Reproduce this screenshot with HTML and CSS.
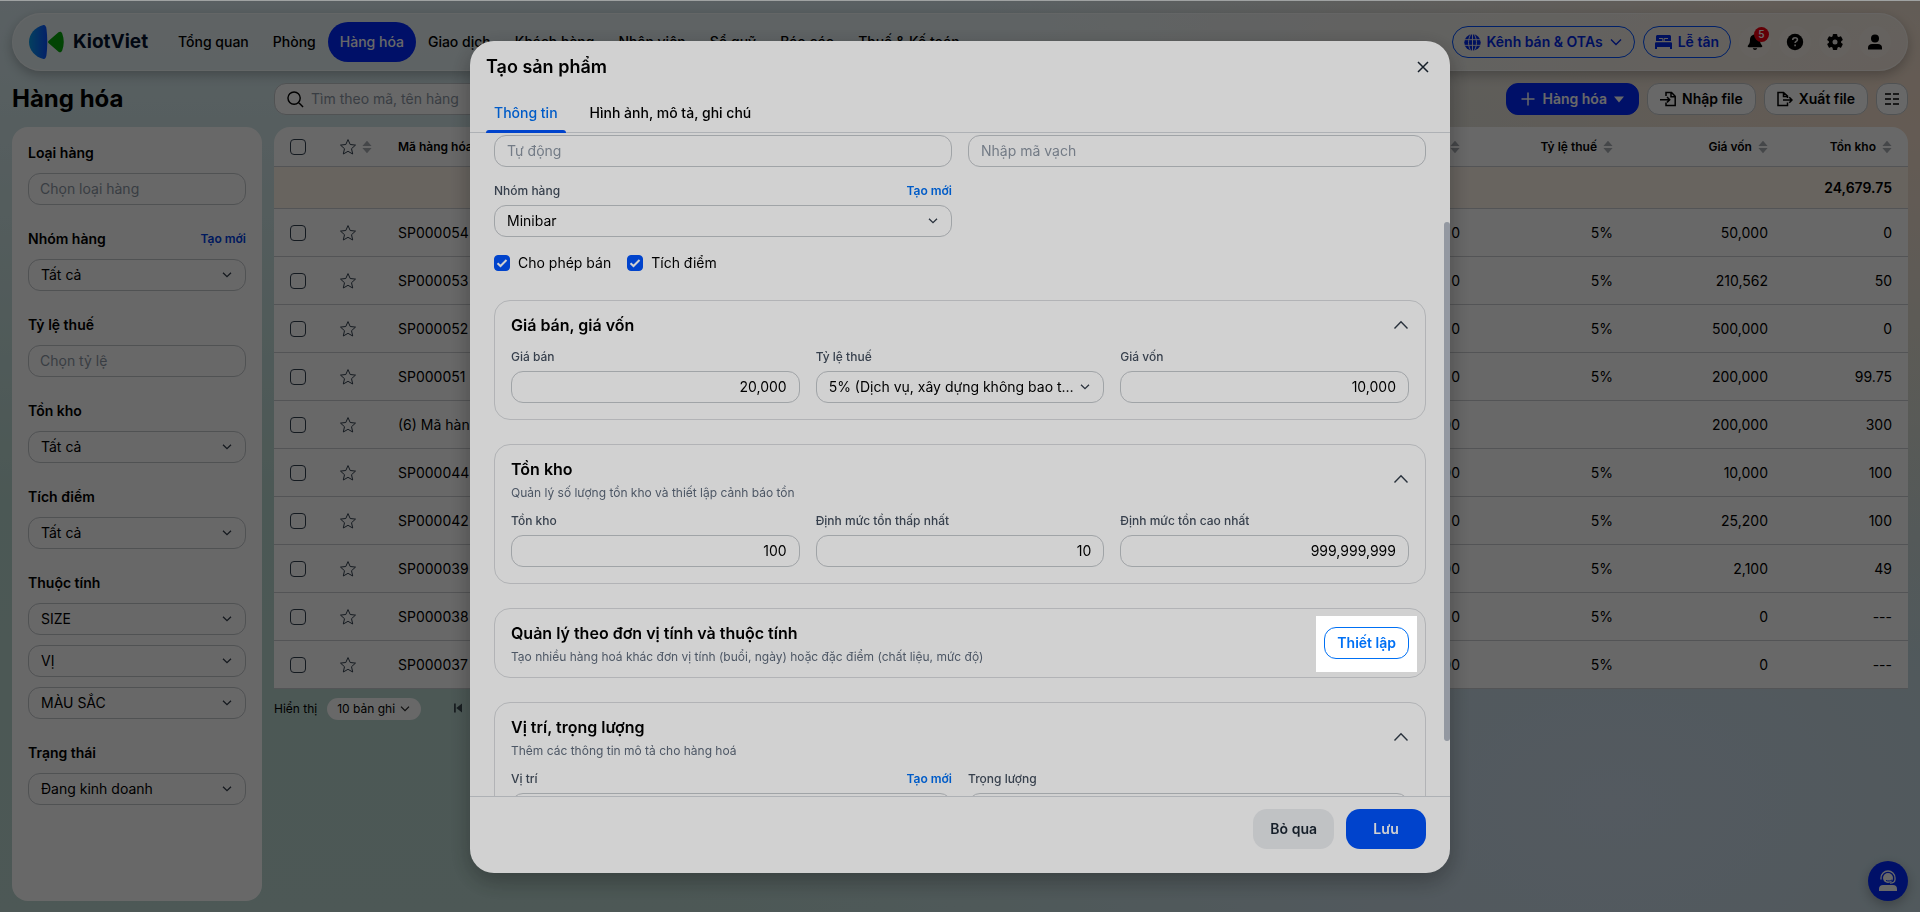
FILE: index.html
```html
<!DOCTYPE html>
<html lang="vi">

<head>
    <meta charset="UTF-8">
    <meta name="viewport" content="width=device-width, initial-scale=1.0">
    <title>Hàng hóa - KiotViet</title>
    <link rel="stylesheet" href="styles.css">
</head>

<body>
    <!-- Shared icons -->
    <svg class="sprite" aria-hidden="true">
        <symbol id="i-star" viewBox="0 0 16 16"><path d="M8 .6l2.200 4.900 5.300.6-4 3.600 1.200 5.300L8 12.300 3.300 15l1.200-5.300-4-3.600 5.300-.6z" fill="none" stroke="currentColor" stroke-linejoin="round"/></symbol>
        <symbol id="i-sort" viewBox="0 0 10 14"><path d="M5 .8L9.600 6H.4zM5 13.200L.4 8h9.200z" fill="currentColor"/></symbol>
        <symbol id="i-up" viewBox="0 0 16 16"><path d="M1.500 11.500L8 4.800l6.500 6.700" fill="none" stroke="currentColor" stroke-width="1.400"/></symbol>
        <symbol id="i-down" viewBox="0 0 16 16"><path d="M3 5.500l5 5 5-5" fill="none" stroke="currentColor" stroke-width="1.400"/></symbol>
    </svg>

    <div class="page">
        <header class="topbar">
            <a class="logo" href="#">
                <svg width="36" height="36" viewBox="0 0 36 36" aria-hidden="true">
                    <defs><linearGradient id="logo-blue"><stop offset="0" stop-color="#0a9be8"/><stop offset="1" stop-color="#0a50ff"/></linearGradient></defs>
                    <path d="M14.500 1C16 .7 17 2 17.500 5c1 8 1 18 0 26-.5 3-1.500 4.300-3 4C6 33 0 26 0 18S6 3 14.500 1z" fill="url(#logo-blue)"/>
                    <path d="M20 16.500L29.500 8.300c1.500-1 3-.6 3.700 1.200 2.100 5.500 2.100 11.500 0 17-.7 1.800-2.200 2.200-3.700 1.200L20 19.500c-1.300-1-1.300-2 0-3z" fill="#06a80a"/>
                </svg>
                <span>KiotViet</span>
            </a>
            <nav class="menu">
                <a href="#">Tổng quan</a>
                <a href="#">Phòng</a>
                <a href="#" class="active">Hàng hóa</a>
                <a href="#">Giao dịch</a>
                <a href="#">Khách hàng</a>
                <a href="#">Nhân viên</a>
                <a href="#">Sổ quỹ</a>
                <a href="#">Báo cáo</a>
                <a href="#">Thuế &amp; Kế toán</a>
            </nav>
            <div class="topbar-actions">
                <button class="btn-outline">
                    <svg width="17" height="17" viewBox="0 0 18 18" aria-hidden="true"><circle cx="9" cy="9" r="8.700" fill="currentColor"/><path d="M0 6h18M0 12h18M9 0v18M7.500 0c-3.600 5-3.600 13 0 18M10.500 0c3.600 5 3.600 13 0 18" fill="none" stroke="#eee9e6"/></svg>
                    Kênh bán &amp; OTAs
                    <svg width="14" height="16" viewBox="0 0 14 16" aria-hidden="true"><path d="M2 5.500l5 5 5-5" fill="none" stroke="currentColor" stroke-width="1.400"/></svg>
                </button>
                <button class="btn-outline">
                    <svg width="17" height="18" viewBox="0 0 17 18" aria-hidden="true"><path d="M2.500 2h12c.8 0 1.500.7 1.500 1.500V8H1V3.500C1 2.700 1.700 2 2.500 2zM1.300 9.300h14.400c.7 0 1.300.5 1.300 1.200V16h-2v-2H2v2H0v-5.500c0-.7.6-1.200 1.300-1.200z" fill="currentColor"/><path d="M4 5.500h3.800V8M13 5.500H9.200V8" fill="none" stroke="#eee9e6"/></svg>
                    Lễ tân
                </button>
                <button class="btn-round" aria-label="Thông báo">
                    <svg width="18" height="18" viewBox="0 0 18 18" aria-hidden="true"><path d="M9 1.500c-3.200 0-5 2.300-5 5.300 0 3.500-1 4.600-2 5.600-.6.700-.2 1.800.8 1.800h12.400c1 0 1.400-1.100.8-1.800-1-1-2-2.100-2-5.600 0-3-1.800-5.300-5-5.300zM6.800 15.300h4.400c-.3 1-1.200 1.700-2.200 1.700s-1.900-.7-2.200-1.700z" fill="currentColor"/></svg>
                    <span class="badge">5</span>
                </button>
                <button class="btn-round" aria-label="Trợ giúp">
                    <svg width="18" height="18" viewBox="0 0 18 18" aria-hidden="true"><circle cx="9" cy="9" r="8.200" fill="currentColor"/><path d="M6.700 7c0-1.500 1-2.300 2.400-2.300s2.300.8 2.300 2c0 1.700-2.300 1.700-2.300 3.300M9.100 11.500v1.700" fill="none" stroke="#e8e4e2" stroke-width="1.600"/></svg>
                </button>
                <button class="btn-round" aria-label="Thiết lập">
                    <svg width="18" height="18" viewBox="0 0 18 18" aria-hidden="true"><g fill="currentColor"><rect x="6.700" y="1" width="4.600" height="16" rx="1"/><rect x="6.700" y="1" width="4.600" height="16" rx="1" transform="rotate(60 9 9)"/><rect x="6.700" y="1" width="4.600" height="16" rx="1" transform="rotate(120 9 9)"/><circle cx="9" cy="9" r="6.200"/></g><circle cx="9" cy="9" r="2.500" fill="#e8e4e2"/></svg>
                </button>
                <button class="btn-round" aria-label="Tài khoản">
                    <svg width="18" height="18" viewBox="0 0 18 18" aria-hidden="true"><circle cx="9" cy="5.500" r="4" fill="currentColor"/><path d="M2 16.500v-2c0-2.200 1.800-3.500 4-3.500h6c2.200 0 4 1.300 4 3.500v2z" fill="currentColor"/></svg>
                </button>
            </div>
        </header>

        <div class="toolbar">
            <h1>Hàng hóa</h1>
            <label class="search">
                <svg width="17" height="17" viewBox="0 0 18 18" aria-hidden="true"><path d="M12 12l5 5M7.500 1a6.500 6.500 0 1 1 0 13 6.500 6.500 0 0 1 0-13z" fill="none" stroke="currentColor" stroke-width="1.500"/></svg>
                <input type="text" placeholder="Tìm theo mã, tên hàng" aria-label="Tìm hàng hóa">
            </label>
            <div class="toolbar-actions">
                <button class="btn btn-add">
                    <svg width="14" height="14" viewBox="0 0 14 14" aria-hidden="true"><path d="M7 .5v13M.5 7h13" stroke="currentColor" stroke-width="1.500"/></svg>
                    Hàng hóa
                    <svg width="10" height="7" viewBox="0 0 10 7" aria-hidden="true"><path d="M0 .5h10L5 6.500z" fill="currentColor"/></svg>
                </button>
                <button class="btn">
                    <svg width="16" height="16" viewBox="0 0 16 16" aria-hidden="true"><path d="M6 5V1.500h5.500l3.700 3.700v9.300H6v-3M11 1.500v4.200h4M0 8.700h9.500M7 6l2.700 2.700L7 11.400" fill="none" stroke="currentColor" stroke-width="1.500"/></svg>
                    Nhập file
                </button>
                <button class="btn">
                    <svg width="16" height="16" viewBox="0 0 16 16" aria-hidden="true"><path d="M10.500 11.500v3H1v-13h5.500L10.500 5v2M6.500 1.500v4h4M6 9h9M12.300 6.300L15 9l-2.700 2.700" fill="none" stroke="currentColor" stroke-width="1.500"/></svg>
                    Xuất file
                </button>
                <button class="btn btn-icon" aria-label="Tùy chọn cột">
                    <svg width="16" height="14" viewBox="0 0 16 14" aria-hidden="true"><path d="M1 2h6M9 2h6M1 7h6M9 7h6M1 12h6M9 12h6" stroke="currentColor" stroke-width="1.500"/></svg>
                </button>
            </div>
        </div>

        <div class="columns">
            <aside class="filters">
                <div class="filter">
                    <label for="f-type">Loại hàng</label>
                    <input class="field" id="f-type" type="text" placeholder="Chọn loại hàng">
                </div>
                <div class="filter">
                    <div class="filter-head"><label for="f-group">Nhóm hàng</label><a href="#">Tạo mới</a></div>
                    <select class="field" id="f-group"><option>Tất cả</option></select>
                </div>
                <div class="filter">
                    <label for="f-tax">Tỷ lệ thuế</label>
                    <input class="field" id="f-tax" type="text" placeholder="Chọn tỷ lệ">
                </div>
                <div class="filter">
                    <label for="f-stock">Tồn kho</label>
                    <select class="field" id="f-stock"><option>Tất cả</option></select>
                </div>
                <div class="filter">
                    <label for="f-point">Tích điểm</label>
                    <select class="field" id="f-point"><option>Tất cả</option></select>
                </div>
                <div class="filter">
                    <label for="f-size">Thuộc tính</label>
                    <select class="field" id="f-size"><option>SIZE</option></select>
                    <select class="field" aria-label="Vị"><option>VỊ</option></select>
                    <select class="field" aria-label="Màu sắc"><option>MÀU SẮC</option></select>
                </div>
                <div class="filter">
                    <label for="f-status">Trạng thái</label>
                    <select class="field" id="f-status"><option>Đang kinh doanh</option></select>
                </div>
            </aside>

            <main class="content">
                <table class="goods">
                    <colgroup>
                        <col class="c-check"><col class="c-star"><col class="c-code"><col><col class="c-tax"><col class="c-cost"><col class="c-stock">
                    </colgroup>
                    <thead>
                        <tr>
                            <th><input type="checkbox" aria-label="Chọn tất cả"></th>
                            <th><span class="star-head"><svg class="star"><use href="#i-star"/></svg><svg class="sort"><use href="#i-sort"/></svg></span></th>
                            <th>Mã hàng hóa</th>
                            <th class="num">Giá bán <svg class="sort"><use href="#i-sort"/></svg></th>
                            <th class="num">Tỷ lệ thuế <svg class="sort"><use href="#i-sort"/></svg></th>
                            <th class="num">Giá vốn <svg class="sort"><use href="#i-sort"/></svg></th>
                            <th class="num">Tồn kho <svg class="sort"><use href="#i-sort"/></svg></th>
                        </tr>
                    </thead>
                    <tbody>
                        <tr class="total"><td colspan="6"></td><td class="num">24,679.75</td></tr>
                        <tr><td><input type="checkbox" aria-label="SP000054"></td><td><svg class="star"><use href="#i-star"/></svg></td><td>SP000054</td><td class="num">0</td><td class="num">5%</td><td class="num">50,000</td><td class="num">0</td></tr>
                        <tr><td><input type="checkbox" aria-label="SP000053"></td><td><svg class="star"><use href="#i-star"/></svg></td><td>SP000053</td><td class="num">0</td><td class="num">5%</td><td class="num">210,562</td><td class="num">50</td></tr>
                        <tr><td><input type="checkbox" aria-label="SP000052"></td><td><svg class="star"><use href="#i-star"/></svg></td><td>SP000052</td><td class="num">0</td><td class="num">5%</td><td class="num">500,000</td><td class="num">0</td></tr>
                        <tr><td><input type="checkbox" aria-label="SP000051"></td><td><svg class="star"><use href="#i-star"/></svg></td><td>SP000051</td><td class="num">0</td><td class="num">5%</td><td class="num">200,000</td><td class="num">99.75</td></tr>
                        <tr><td><input type="checkbox" aria-label="(6) Mã hàng"></td><td><svg class="star"><use href="#i-star"/></svg></td><td>(6) Mã hàng</td><td class="num">00</td><td class="num"></td><td class="num">200,000</td><td class="num">300</td></tr>
                        <tr><td><input type="checkbox" aria-label="SP000044"></td><td><svg class="star"><use href="#i-star"/></svg></td><td>SP000044</td><td class="num">00</td><td class="num">5%</td><td class="num">10,000</td><td class="num">100</td></tr>
                        <tr><td><input type="checkbox" aria-label="SP000042"></td><td><svg class="star"><use href="#i-star"/></svg></td><td>SP000042</td><td class="num">0</td><td class="num">5%</td><td class="num">25,200</td><td class="num">100</td></tr>
                        <tr><td><input type="checkbox" aria-label="SP000039"></td><td><svg class="star"><use href="#i-star"/></svg></td><td>SP000039</td><td class="num">00</td><td class="num">5%</td><td class="num">2,100</td><td class="num">49</td></tr>
                        <tr><td><input type="checkbox" aria-label="SP000038"></td><td><svg class="star"><use href="#i-star"/></svg></td><td>SP000038</td><td class="num">0</td><td class="num">5%</td><td class="num">0</td><td class="num">---</td></tr>
                        <tr><td><input type="checkbox" aria-label="SP000037"></td><td><svg class="star"><use href="#i-star"/></svg></td><td>SP000037</td><td class="num">00</td><td class="num">5%</td><td class="num">0</td><td class="num">---</td></tr>
                    </tbody>
                </table>
                <div class="pager">
                    <label for="page-size">Hiển thị</label>
                    <select id="page-size"><option>10 bản ghi</option></select>
                    <button aria-label="Trang đầu"><svg width="10" height="10" viewBox="0 0 10 10" aria-hidden="true"><path d="M1 .5h1.800v9H1zM9 .5v9L3.300 5z" fill="currentColor"/></svg></button>
                </div>
            </main>
        </div>
    </div>

    <button class="support" aria-label="Hỗ trợ">
        <svg width="22" height="22" viewBox="0 0 22 22" aria-hidden="true"><circle cx="11" cy="8" r="5" fill="currentColor"/><path d="M4 9.500V8a7 7 0 0 1 14 0v1.500c0 2.500-2 3.700-5 3.700" fill="none" stroke="currentColor" stroke-width="1.300"/><path d="M9 10.500c2 .8 4.500.6 6-.5" fill="none" stroke="#0028ff"/><path d="M2 21v-2c0-2.500 1.500-4 4-4h10c2.500 0 4 1.500 4 4v2z" fill="currentColor"/></svg>
    </button>

    <!-- Product form -->
    <div class="backdrop">
        <div class="modal" role="dialog" aria-labelledby="modal-title">
            <div class="modal-head">
                <h2 id="modal-title">Tạo sản phẩm</h2>
                <button class="close" aria-label="Đóng"><svg width="12" height="12" viewBox="0 0 12 12" aria-hidden="true"><path d="M1 1l10 10M11 1L1 11" stroke="currentColor" stroke-width="1.500"/></svg></button>
            </div>
            <div class="tabs">
                <button class="tab active">Thông tin</button>
                <button class="tab">Hình ảnh, mô tả, ghi chú</button>
            </div>
            <div class="modal-body">
                <div class="grid-2">
                    <input class="field" type="text" placeholder="Tự động" aria-label="Mã hàng">
                    <input class="field" type="text" placeholder="Nhập mã vạch" aria-label="Mã vạch">
                    <div class="form-item">
                        <div class="form-label"><label for="p-group">Nhóm hàng</label><a href="#">Tạo mới</a></div>
                        <select class="field" id="p-group"><option>Minibar</option></select>
                    </div>
                </div>
                <div class="checks">
                    <label><input type="checkbox" checked>Cho phép bán</label>
                    <label><input type="checkbox" checked>Tích điểm</label>
                </div>

                <section class="card">
                    <div class="card-head">
                        <h3>Giá bán, giá vốn</h3>
                        <button class="collapse" aria-label="Thu gọn"><svg width="16" height="16"><use href="#i-up"/></svg></button>
                    </div>
                    <div class="grid-3">
                        <div class="form-item">
                            <div class="form-label"><label for="p-price">Giá bán</label></div>
                            <input class="field num" id="p-price" type="text" value="20,000">
                        </div>
                        <div class="form-item">
                            <div class="form-label"><label for="p-tax">Tỷ lệ thuế</label></div>
                            <select class="field" id="p-tax"><option>5% (Dịch vụ, xây dựng không bao thầu nguyên vật liệu)</option></select>
                        </div>
                        <div class="form-item">
                            <div class="form-label"><label for="p-cost">Giá vốn</label></div>
                            <input class="field num" id="p-cost" type="text" value="10,000">
                        </div>
                    </div>
                </section>

                <section class="card">
                    <div class="card-head">
                        <div>
                            <h3>Tồn kho</h3>
                            <p>Quản lý số lượng tồn kho và thiết lập cảnh báo tồn</p>
                        </div>
                        <button class="collapse" aria-label="Thu gọn"><svg width="16" height="16"><use href="#i-up"/></svg></button>
                    </div>
                    <div class="grid-3">
                        <div class="form-item">
                            <div class="form-label"><label for="p-stock">Tồn kho</label></div>
                            <input class="field num" id="p-stock" type="text" value="100">
                        </div>
                        <div class="form-item">
                            <div class="form-label"><label for="p-min">Định mức tồn thấp nhất</label></div>
                            <input class="field num" id="p-min" type="text" value="10">
                        </div>
                        <div class="form-item">
                            <div class="form-label"><label for="p-max">Định mức tồn cao nhất</label></div>
                            <input class="field num" id="p-max" type="text" value="999,999,999">
                        </div>
                    </div>
                </section>

                <section class="card card-short">
                    <div class="card-head">
                        <div>
                            <h3>Quản lý theo đơn vị tính và thuộc tính</h3>
                            <p>Tạo nhiều hàng hoá khác đơn vị tính (buổi, ngày) hoặc đặc điểm (chất liệu, mức độ)</p>
                        </div>
                        <button class="btn-setup">Thiết lập</button>
                    </div>
                </section>

                <section class="card">
                    <div class="card-head">
                        <div>
                            <h3>Vị trí, trọng lượng</h3>
                            <p>Thêm các thông tin mô tả cho hàng hoá</p>
                        </div>
                        <button class="collapse" aria-label="Thu gọn"><svg width="16" height="16"><use href="#i-up"/></svg></button>
                    </div>
                    <div class="grid-2">
                        <div class="form-item">
                            <div class="form-label"><label for="p-place">Vị trí</label><a href="#">Tạo mới</a></div>
                            <select class="field" id="p-place"><option></option></select>
                        </div>
                        <div class="form-item">
                            <div class="form-label"><label for="p-weight">Trọng lượng</label></div>
                            <input class="field num" id="p-weight" type="text">
                        </div>
                    </div>
                </section>
            </div>
            <div class="modal-foot">
                <button class="btn-cancel">Bỏ qua</button>
                <button class="btn-save">Lưu</button>
            </div>
            <div class="scroll-thumb"></div>
            <div class="spotlight"></div>
        </div>
    </div>
</body>

</html>
```

FILE: styles.css
```css
* {
    box-sizing: border-box;
}

body {
    margin: 0;
    border-top: 1px solid #c2c6c6;
    font-family: "Inter", "Liberation Sans", sans-serif;
    font-size: 14px;
    line-height: 20px;
    color: #000;
    overflow: hidden;
    background:
        radial-gradient(ellipse 50% 60% at 100% 12%, #f6dfcc 0%, rgba(246, 223, 204, 0) 100%),
        radial-gradient(ellipse 50% 70% at 84% 88%, #cddcec 0%, rgba(205, 220, 236, 0) 100%),
        linear-gradient(to bottom, #dcecf2 0%, #b9d7d0 55%, #bcd8d2 100%);
}

button, input, select {
    font: inherit;
    color: inherit;
}

button {
    padding: 0;
    border: none;
    background: none;
    cursor: pointer;
}

a {
    color: #0070f4;
    text-decoration: none;
}

h1, h2, h3, p {
    margin: 0;
}

.sprite {
    display: none;
}

.page {
    display: flex;
    flex-direction: column;
    height: calc(100vh - 1px);
    padding: 12px 12px 11px;
}

/* Top bar */
.topbar {
    display: flex;
    align-items: center;
    height: 58px;
    padding: 0 16px;
    border: 1px solid rgba(255, 255, 255, 0.5);
    border-radius: 29px;
    background: rgba(255, 255, 255, 0.4);
    box-shadow: 0 4px 12px rgba(0, 0, 0, 0.25);
}

.logo {
    display: flex;
    align-items: center;
    gap: 8px;
    width: 137px;
    color: #04122e;
    font-size: 19px;
    font-weight: 700;
}

.menu {
    display: flex;
    flex: 1;
    white-space: nowrap;
}

.menu a {
    padding: 10px 12px;
    border-radius: 20px;
    color: #000;
    font-weight: 500;
}

.menu a.active {
    background: #0028ff;
    color: #fff;
}

.topbar-actions {
    display: flex;
    gap: 8px;
}

.btn-outline {
    display: flex;
    align-items: center;
    gap: 6px;
    height: 32px;
    padding: 0 11px;
    border: 1px solid #0050ff;
    border-radius: 16px;
    color: #0028e6;
    font-weight: 600;
}

.btn-round {
    position: relative;
    display: flex;
    align-items: center;
    justify-content: center;
    width: 32px;
    height: 32px;
    border-radius: 50%;
    background: rgba(255, 255, 255, 0.2);
}

.badge {
    position: absolute;
    top: 1px;
    left: 15px;
    width: 15px;
    height: 15px;
    border-radius: 50%;
    background: #f00010;
    color: #fff;
    font-size: 10px;
    font-weight: 600;
    line-height: 15px;
}

/* Title, search and actions */
.toolbar {
    display: flex;
    align-items: center;
    gap: 12px;
    padding: 12px 0;
}

.toolbar h1 {
    width: 250px;
    font-size: 24px;
    line-height: 32px;
    font-weight: 700;
}

.search {
    display: flex;
    align-items: center;
    gap: 7px;
    width: 400px;
    height: 32px;
    padding: 0 12px;
    border: 1px solid #c4c8cc;
    border-radius: 12px;
    background: #fff;
}

.search input {
    flex: 1;
    border: none;
    background: none;
    padding: 0;
}

.toolbar-actions {
    display: flex;
    gap: 8px;
    margin-left: auto;
}

.btn {
    display: flex;
    align-items: center;
    gap: 6px;
    height: 32px;
    padding: 0 12px;
    border: 1px solid #c4c8cc;
    border-radius: 12px;
    background: #fff;
    font-weight: 600;
}

.btn-add {
    gap: 7px;
    padding: 0 14px;
    border-color: #0028ff;
    background: #0028ff;
    color: #fff;
}

.btn-icon {
    width: 32px;
    padding: 0 7px;
}

.columns {
    display: flex;
    flex: 1;
    gap: 12px;
    min-height: 0;
}

/* Filters */
.filters {
    display: flex;
    flex-direction: column;
    gap: 24px;
    width: 250px;
    padding: 16px;
    border-radius: 16px;
    background: #fff;
}

.filter {
    display: flex;
    flex-direction: column;
    gap: 10px;
    font-weight: 600;
}

.filter-head {
    display: flex;
    justify-content: space-between;
}

.filter-head a {
    color: #0040e6;
    font-size: 12px;
    font-weight: 600;
}

.field {
    width: 100%;
    height: 32px;
    padding: 0 12px;
    border: 1px solid #c4c8cc;
    border-radius: 12px;
    background: none;
    font-weight: 400;
}

input.field {
    padding-bottom: 2px;
}

input::placeholder {
    color: #8d97a4;
    opacity: 1;
}

.filters input.field {
    padding-left: 11px;
}

select {
    appearance: none;
    overflow: hidden;
    text-overflow: ellipsis;
    white-space: nowrap;
}

select.field {
    padding-right: 28px;
    background: url("data:image/svg+xml,%3Csvg xmlns='http://www.w3.org/2000/svg' width='10' height='6'%3E%3Cpath d='M1 .7l4 4 4-4' fill='none' stroke='%23333d4a' stroke-width='1.300'/%3E%3C/svg%3E") no-repeat right 13px center;
}

input[type="checkbox"] {
    appearance: none;
    display: block;
    width: 16px;
    height: 16px;
    margin: 0;
    border: 1px solid #33404f;
    border-radius: 4px;
}

input[type="checkbox"]:checked {
    border-color: #0052f9;
    background: #0052f9 url("data:image/svg+xml,%3Csvg xmlns='http://www.w3.org/2000/svg' width='12' height='10'%3E%3Cpath d='M1.500 5.200l3 2.800 6-6' fill='none' stroke='white' stroke-width='2'/%3E%3C/svg%3E") no-repeat center;
}

/* Goods table */
.content {
    flex: 1;
    min-width: 0;
}

.goods {
    width: 100%;
    table-layout: fixed;
    border-spacing: 0;
    border-radius: 16px 16px 0 0;
    overflow: hidden;
    background: #fff;
}

.c-check {
    width: 50px;
}

.c-star {
    width: 58px;
}

.c-code {
    width: 160px;
}

.c-tax {
    width: 153px;
}

.c-cost {
    width: 155px;
}

.c-stock {
    width: 124px;
}

.goods th,
.goods td {
    height: 48px;
    padding: 0 0 0 16px;
    border-bottom: 1px solid #ccced2;
    text-align: left;
    white-space: nowrap;
}

.goods th {
    height: 40px;
    font-size: 12px;
    font-weight: 600;
}

.goods .num {
    padding: 0 16px 0 0;
    text-align: right;
}

.goods .total td {
    height: 42px;
    background: #fff5ea;
    font-weight: 600;
}

.star {
    display: block;
    width: 16px;
    height: 16px;
    color: #33404f;
}

.star-head {
    display: flex;
    align-items: center;
    gap: 6px;
}

.sort {
    width: 10px;
    height: 14px;
    margin-left: 3px;
    color: #aaaeb4;
    vertical-align: middle;
}

.star-head .sort {
    margin: 0;
}

.pager {
    display: flex;
    align-items: center;
    gap: 10px;
    padding: 9px 0;
    font-size: 12px;
}

.pager select {
    width: 94px;
    height: 22px;
    padding: 0 10px;
    border: none;
    border-radius: 11px;
    background: #fff url("data:image/svg+xml,%3Csvg xmlns='http://www.w3.org/2000/svg' width='10' height='6'%3E%3Cpath d='M1 .7l4 4 4-4' fill='none' stroke='%23222' stroke-width='1.200'/%3E%3C/svg%3E") no-repeat right 11px center;
}

.pager button {
    margin-left: 22px;
    color: #3c4a52;
}

.support {
    position: fixed;
    right: 12px;
    bottom: 11px;
    display: flex;
    align-items: center;
    justify-content: center;
    width: 40px;
    height: 40px;
    border-radius: 50%;
    background: #0028ff;
    color: #fff;
    box-shadow: 0 4px 12px rgba(0, 0, 0, 0.25);
}

/* Modal */
.backdrop {
    position: fixed;
    inset: 1px 0 0;
    display: flex;
    justify-content: center;
    padding: 40px 16px 39px;
    background: rgba(0, 0, 0, 0.5);
}

.modal {
    position: relative;
    display: flex;
    flex-direction: column;
    width: 100%;
    max-width: 980px;
    border-radius: 24px;
    background: #fff;
    box-shadow: 0 8px 24px rgba(0, 0, 0, 0.3);
}

.modal-head {
    display: flex;
    align-items: center;
    justify-content: space-between;
    height: 52px;
    padding: 0 16px;
}

.modal-head h2 {
    font-size: 18px;
    font-weight: 600;
}

.close {
    display: flex;
    padding: 5px;
    color: #1c2733;
}

.tabs {
    display: flex;
    gap: 16px;
    height: 40px;
    padding: 0 16px;
    box-shadow: inset 0 -1px #d5d8dd;
}

.tab {
    position: relative;
    padding: 0 8px;
    font-weight: 500;
}

.tab.active {
    color: #0070f4;
}

.tab.active::after {
    content: "";
    position: absolute;
    left: 0;
    right: 0;
    bottom: 0;
    height: 3px;
    border-radius: 3px 3px 0 0;
    background: #0052f9;
}

.modal-body {
    flex: 1;
    min-height: 0;
    padding: 2px 24px 0;
    overflow: hidden;
}

.grid-2,
.grid-3 {
    display: grid;
    grid-template-columns: repeat(2, minmax(0, 1fr));
    gap: 16px;
}

.grid-3 {
    grid-template-columns: repeat(3, minmax(0, 1fr));
}

.field.num {
    text-align: right;
}

.form-item {
    display: flex;
    flex-direction: column;
    gap: 6px;
}

.form-label {
    display: flex;
    justify-content: space-between;
    color: #444f5e;
    font-size: 12px;
    line-height: 16px;
    font-weight: 500;
}

.form-label a {
    font-weight: 600;
}

.checks {
    display: flex;
    gap: 16px;
    margin: 16px 0 27px;
}

.checks label {
    display: flex;
    align-items: center;
    gap: 8px;
}

.card {
    margin-bottom: 24px;
    padding: 12px 16px 16px;
    border: 1px solid #d9dbde;
    border-radius: 16px;
}

.card-short {
    padding-bottom: 12px;
}

.card-head {
    display: flex;
    align-items: center;
    justify-content: space-between;
}

.card-head + div {
    margin-top: 12px;
}

.card h3 {
    font-size: 16px;
    line-height: 24px;
    font-weight: 600;
}

.card p {
    margin-top: 4px;
    color: #5f6b7c;
    font-size: 12px;
    line-height: 16px;
}

.collapse {
    display: flex;
    color: #333d4a;
}

.btn-setup {
    height: 32px;
    padding: 0 12px;
    border: 1px solid #0070f4;
    border-radius: 12px;
    color: #0070f4;
    font-weight: 600;
}

.modal-foot {
    display: flex;
    justify-content: flex-end;
    gap: 12px;
    padding: 12px 24px 24px;
    border-top: 1px solid #d5d8dd;
}

.modal-foot button {
    min-width: 80px;
    height: 40px;
    padding: 0 17px;
    border-radius: 14px;
    font-weight: 600;
}

.modal-foot .btn-cancel {
    background: #ebedf0;
    color: #1c2733;
}

.modal-foot .btn-save {
    background: #0052f9;
    color: #fff;
}

.scroll-thumb {
    position: absolute;
    top: 181px;
    right: 0;
    width: 6px;
    height: 519px;
    border-radius: 3px;
    background: #b4bac5;
}

/* Guided tour highlight around the setup button */
.spotlight {
    position: absolute;
    top: 575px;
    right: 33px;
    width: 101px;
    height: 56px;
    box-shadow: 0 0 0 9999px rgba(0, 0, 0, 0.18);
    pointer-events: none;
}
```
